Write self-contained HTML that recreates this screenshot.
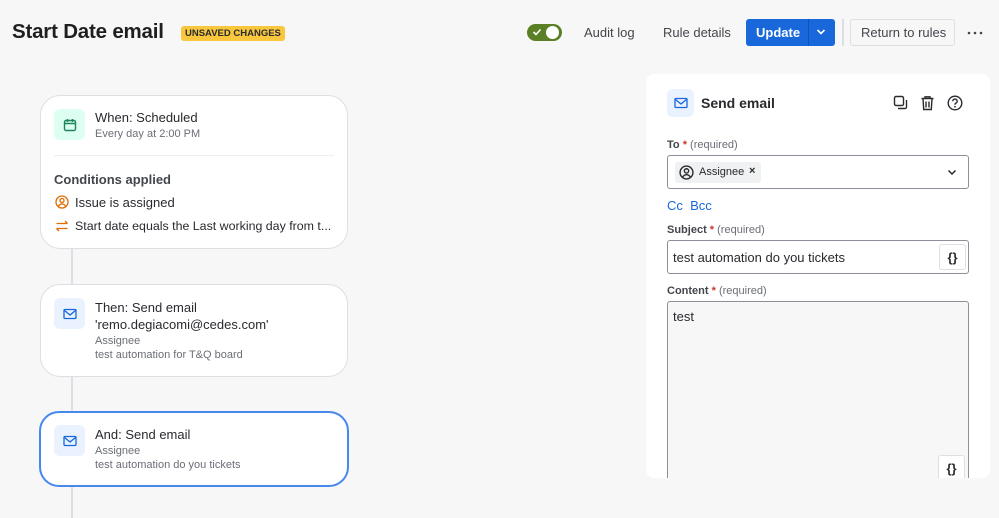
<!DOCTYPE html>
<html><head><meta charset="utf-8"><style>
*{box-sizing:border-box;margin:0;padding:0}
body{width:999px;height:515px;background:#f7f7f7;font-family:"Liberation Sans",sans-serif;color:#292a2e;position:relative;overflow:hidden}
.abs{position:absolute}
h1{position:absolute;left:12px;top:20px;font-size:20.5px;font-weight:bold;color:#1f1f21;letter-spacing:-0.2px}
.badge{left:181px;top:26px;background:#f8c73e;color:#292a2e;font-size:9.5px;font-weight:bold;padding:2px 4px;border-radius:3px}
.card{position:absolute;background:#fff;border:1px solid #dcdfe4;border-radius:20px}
.ico{position:absolute;width:31px;height:31px;border-radius:6px;display:flex;align-items:center;justify-content:center}
.t{position:absolute;font-size:13px;white-space:nowrap}
.s{position:absolute;font-size:11px;color:#6b6e76;white-space:nowrap}
.lbl{position:absolute;font-size:11px;font-weight:bold;color:#44464d}
.lbl i{color:#c9372c;font-style:normal}
.lbl span{font-weight:normal;color:#6b6e76}
.field{position:absolute;border:1px solid #8c8f97;border-radius:3px;background:#fff}
.br{position:absolute;width:27px;height:26px;border:1px solid #dcdfe4;border-radius:3px;background:#fff;font-size:13px;font-weight:bold;display:flex;align-items:center;justify-content:center}
</style></head><body>
<h1>Start Date email</h1>
<div class="abs badge">UNSAVED CHANGES</div>
<div class="abs" style="left:527px;top:24px;width:35px;height:17px;border-radius:9px;background:#5b7f24"></div>
<svg class="abs" style="left:532px;top:27px" width="10" height="10" viewBox="0 0 10 10"><path d="M1.5 5l2.5 2.5 4.5-5" stroke="#fff" stroke-width="1.6" fill="none"/></svg>
<div class="abs" style="left:546px;top:26px;width:13px;height:13px;border-radius:50%;background:#fff"></div>
<div class="t" style="left:584px;top:25px;color:#44464d">Audit log</div>
<div class="t" style="left:663px;top:25px;color:#44464d">Rule details</div>
<div class="abs" style="left:746px;top:19px;width:89px;height:27px;background:#1868db;border-radius:3px"></div>
<div class="t" style="left:756px;top:25px;color:#fff;font-weight:bold">Update</div>
<div class="abs" style="left:808px;top:19px;width:1px;height:27px;background:#0c55b8"></div>
<svg class="abs" style="left:816px;top:28px" width="10" height="8" viewBox="0 0 10 8"><path d="M1.5 2l3.5 3.5 3.5-3.5" stroke="#fff" stroke-width="1.6" fill="none"/></svg>
<div class="abs" style="left:842px;top:19px;width:2px;height:27px;background:#dcdfe4"></div>
<div class="abs" style="left:850px;top:19px;width:105px;height:27px;border:1px solid #dcdfe4;border-radius:3px;background:#f7f7f7"></div>
<div class="t" style="left:861px;top:25px;color:#44464d">Return to rules</div>
<svg class="abs" style="left:967px;top:31px" width="16" height="4" viewBox="0 0 16 4"><circle cx="2" cy="2" r="1.3" fill="#44464d"/><circle cx="8" cy="2" r="1.3" fill="#44464d"/><circle cx="14" cy="2" r="1.3" fill="#44464d"/></svg>

<div class="abs" style="left:71px;top:248px;width:2px;height:270px;background:#dcdfe4"></div>

<div class="card" style="left:40px;top:95px;width:308px;height:154px"></div>
<div class="ico" style="left:54px;top:109px;background:#dcfff1"><svg width="14" height="14" viewBox="0 0 14 14"><rect x="1.5" y="2.5" width="11" height="10" rx="1.5" stroke="#1f845a" stroke-width="1.4" fill="none"/><path d="M1.5 5.5h11M4.5 1v3M9.5 1v3" stroke="#1f845a" stroke-width="1.4"/></svg></div>
<div class="t" style="left:95px;top:110px">When: Scheduled</div>
<div class="s" style="left:95px;top:128px">Every day at 2:00 PM</div>
<div class="abs" style="left:54px;top:155px;width:280px;height:1px;background:#eceef0"></div>
<div class="t" style="left:54px;top:172px;font-weight:bold;color:#44464d">Conditions applied</div>
<svg class="abs" style="left:55px;top:195px" width="14" height="14" viewBox="0 0 14 14"><circle cx="7" cy="7" r="6" stroke="#e06c00" stroke-width="1.3" fill="none"/><circle cx="7" cy="5.5" r="2" stroke="#e06c00" stroke-width="1.3" fill="none"/><path d="M3.3 11.3c1-1.6 2.2-2.3 3.7-2.3s2.7.7 3.7 2.3" stroke="#e06c00" stroke-width="1.3" fill="none"/></svg>
<div class="t" style="left:75px;top:195px">Issue is assigned</div>
<svg class="abs" style="left:55px;top:219px" width="14" height="14" viewBox="0 0 14 14"><path d="M1.5 4.5h11M10 2l2.5 2.5M12.5 9.5h-11M4 12L1.5 9.5" stroke="#e06c00" stroke-width="1.3" fill="none"/></svg>
<div class="t" style="left:75px;top:219px;font-size:12.4px">Start date equals the Last working day from t...</div>

<div class="card" style="left:40px;top:284px;width:308px;height:93px"></div>
<div class="ico" style="left:54px;top:298px;background:#e9f2fe"><svg width="14" height="12" viewBox="0 0 14 12"><rect x="1" y="1.5" width="12" height="9" rx="1" stroke="#1868db" stroke-width="1.3" fill="none"/><path d="M1.5 2.5L7 7l5.5-4.5" stroke="#1868db" stroke-width="1.3" fill="none"/></svg></div>
<div class="t" style="left:95px;top:300px">Then: Send email</div>
<div class="t" style="left:95px;top:317px">'remo.degiacomi@cedes.com'</div>
<div class="s" style="left:95px;top:335px">Assignee</div>
<div class="s" style="left:95px;top:349px">test automation for T&amp;Q board</div>

<div class="card" style="left:39px;top:411px;width:310px;height:76px;border:2px solid #4688ec"></div>
<div class="ico" style="left:54px;top:425px;background:#e9f2fe"><svg width="14" height="12" viewBox="0 0 14 12"><rect x="1" y="1.5" width="12" height="9" rx="1" stroke="#1868db" stroke-width="1.3" fill="none"/><path d="M1.5 2.5L7 7l5.5-4.5" stroke="#1868db" stroke-width="1.3" fill="none"/></svg></div>
<div class="t" style="left:95px;top:427px">And: Send email</div>
<div class="s" style="left:95px;top:445px">Assignee</div>
<div class="s" style="left:95px;top:459px">test automation do you tickets</div>

<div class="abs" style="left:646px;top:74px;width:344px;height:404px;background:#fff;border-radius:8px"></div>
<div class="ico" style="left:667px;top:89px;width:27px;height:28px;background:#e9f2fe"><svg width="14" height="12" viewBox="0 0 14 12"><rect x="1" y="1.5" width="12" height="9" rx="1" stroke="#1868db" stroke-width="1.3" fill="none"/><path d="M1.5 2.5L7 7l5.5-4.5" stroke="#1868db" stroke-width="1.3" fill="none"/></svg></div>
<div class="t" style="left:701px;top:95px;font-size:14px;font-weight:bold">Send email</div>
<svg class="abs" style="left:893px;top:95px" width="16" height="16" viewBox="0 0 16 16"><rect x="1.5" y="1.5" width="9" height="9" rx="1.5" stroke="#292a2e" stroke-width="1.4" fill="none"/><path d="M13.5 5v7a1.5 1.5 0 0 1-1.5 1.5H5" stroke="#292a2e" stroke-width="1.4" fill="none"/></svg>
<svg class="abs" style="left:920px;top:95px" width="15" height="16" viewBox="0 0 15 16"><path d="M1.5 3.5h12M5 3.5V1.8h5v1.7M3 3.5l.7 11h7.6l.7-11M6 6.5v6M9 6.5v6" stroke="#292a2e" stroke-width="1.4" fill="none"/></svg>
<svg class="abs" style="left:947px;top:95px" width="16" height="16" viewBox="0 0 16 16"><circle cx="8" cy="8" r="6.8" stroke="#292a2e" stroke-width="1.4" fill="none"/><path d="M5.8 6.2a2.2 2.2 0 1 1 2.9 2.1c-.5.2-.7.6-.7 1.1v.4" stroke="#292a2e" stroke-width="1.4" fill="none"/><circle cx="8" cy="11.8" r=".9" fill="#292a2e"/></svg>

<div class="lbl" style="left:667px;top:139px">To <i>*</i> <span>(required)</span></div>
<div class="field" style="left:667px;top:155px;width:302px;height:34px"></div>
<div class="abs" style="left:675px;top:162px;width:86px;height:21px;background:#f0f1f2;border-radius:3px"></div>
<svg class="abs" style="left:679px;top:165px" width="15" height="15" viewBox="0 0 14 14"><circle cx="7" cy="7" r="6" stroke="#292a2e" stroke-width="1.3" fill="none"/><circle cx="7" cy="5.5" r="2" stroke="#292a2e" stroke-width="1.3" fill="none"/><path d="M3.3 11.3c1-1.6 2.2-2.3 3.7-2.3s2.7.7 3.7 2.3" stroke="#292a2e" stroke-width="1.3" fill="none"/></svg>
<div class="s" style="left:699px;top:166px;color:#292a2e">Assignee</div>
<div class="s" style="left:749px;top:165px;color:#292a2e;font-weight:bold">×</div>
<svg class="abs" style="left:947px;top:169px" width="10" height="7" viewBox="0 0 10 7"><path d="M1.5 1.5l3.5 3.5 3.5-3.5" stroke="#292a2e" stroke-width="1.5" fill="none"/></svg>
<div class="t" style="left:667px;top:198px;color:#1868db">Cc&nbsp;&nbsp;Bcc</div>

<div class="lbl" style="left:667px;top:224px">Subject <i>*</i> <span>(required)</span></div>
<div class="field" style="left:667px;top:240px;width:302px;height:34px"></div>
<div class="t" style="left:673px;top:250px">test automation do you tickets</div>
<div class="br" style="left:939px;top:244px">{}</div>

<div class="lbl" style="left:667px;top:285px">Content <i>*</i> <span>(required)</span></div>
<div class="field" style="left:667px;top:301px;width:302px;height:190px;background:#f7f7f7"></div>
<div class="t" style="left:673px;top:309px">test</div>
<div class="br" style="left:938px;top:455px">{}</div>
<div class="abs" style="left:646px;top:478px;width:353px;height:40px;background:#f7f7f7"></div>
</body></html>
